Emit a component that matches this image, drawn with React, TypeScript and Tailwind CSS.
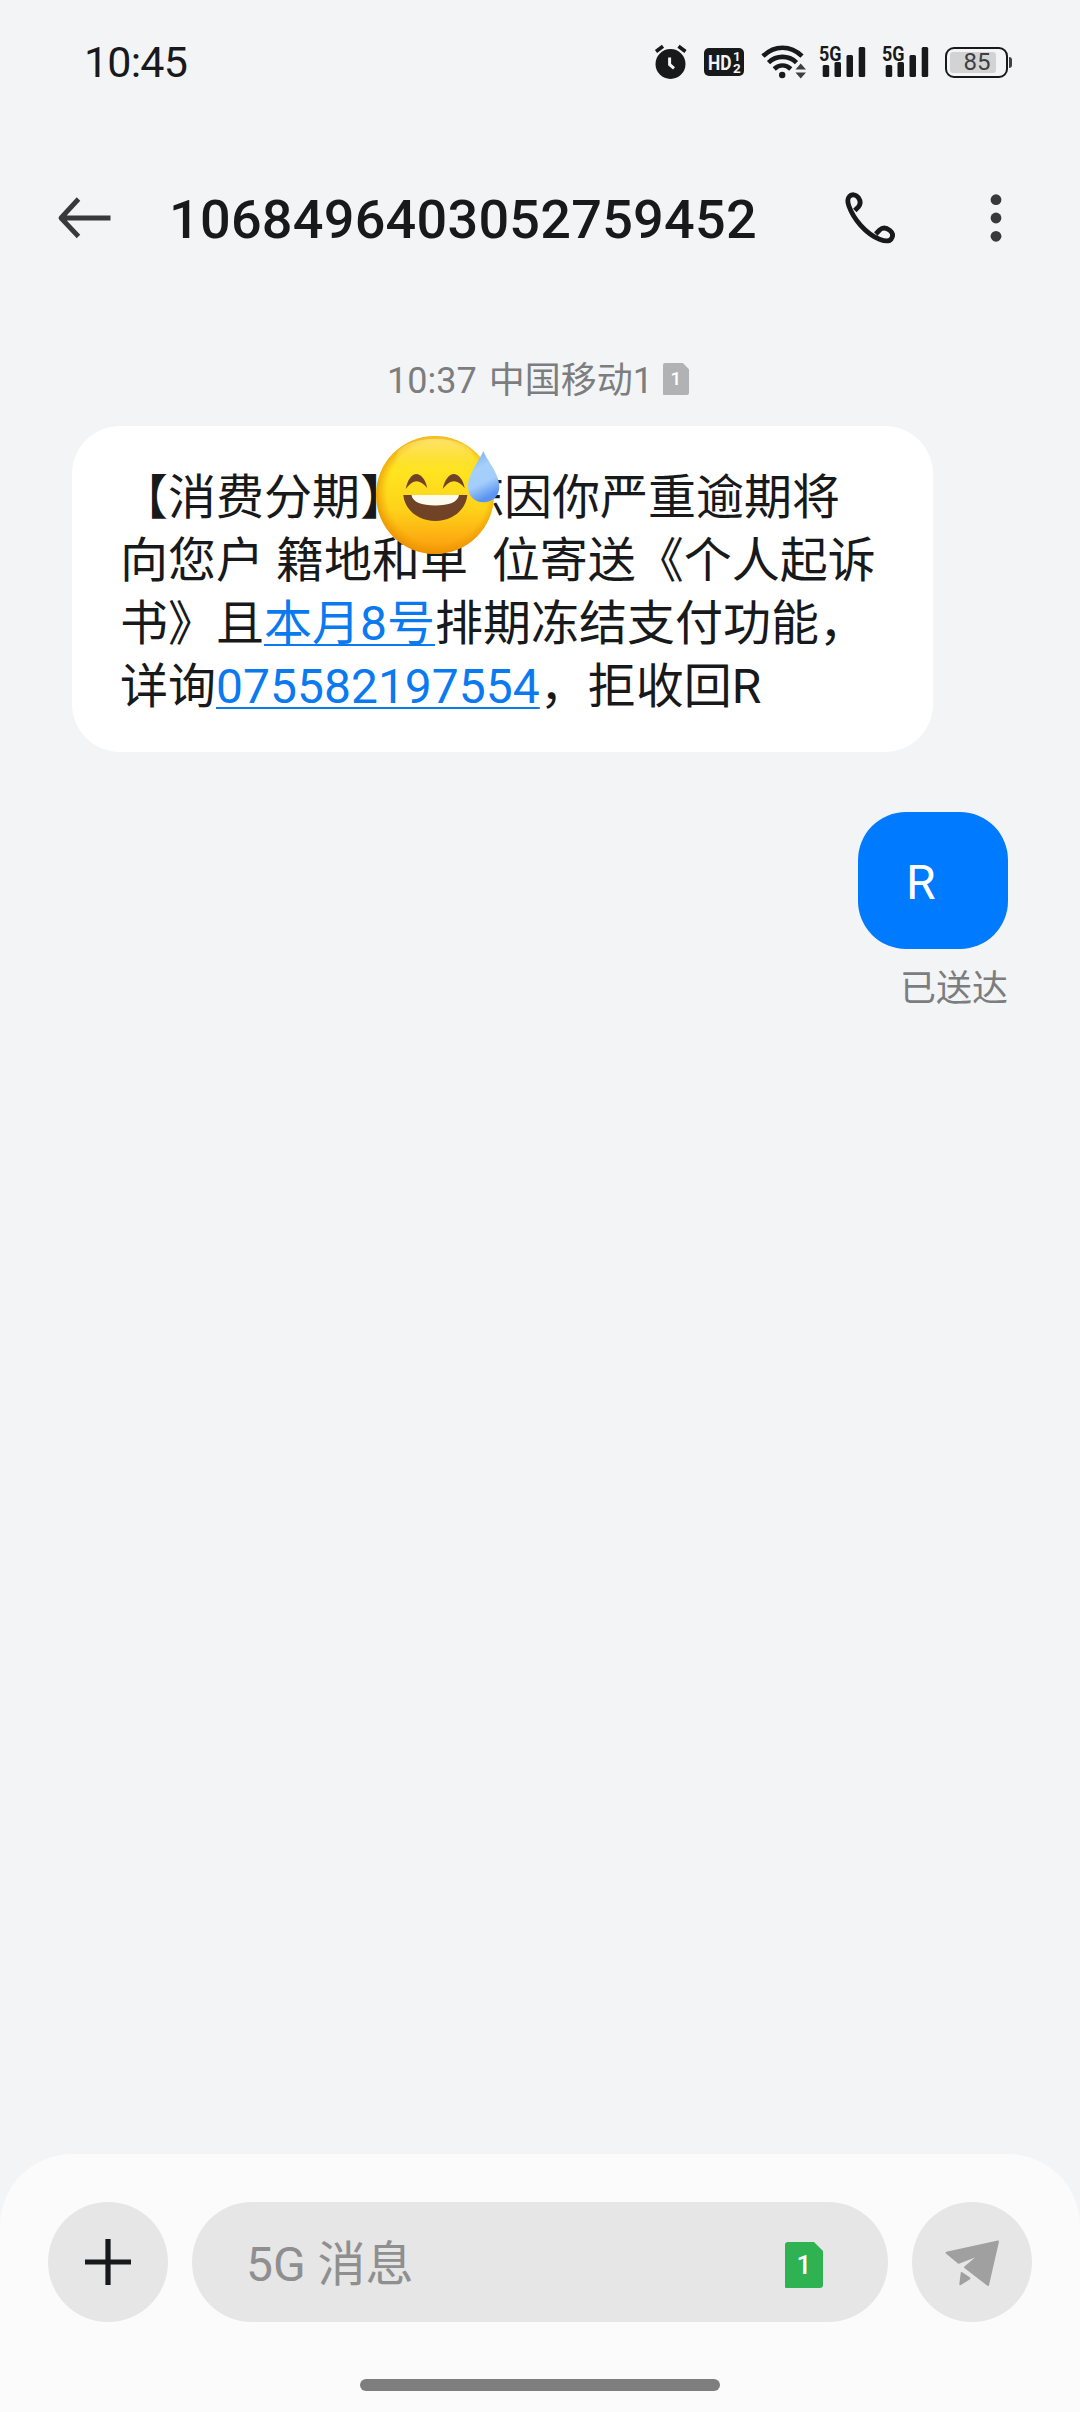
import type { ReactNode } from "react";

function AlarmIcon() {
  return (
    <svg width="34" height="36" viewBox="0 0 34 36" className="text-[#18191b]">
      <circle cx="16.5" cy="20" r="15" fill="currentColor" />
      <path
        d="M2 7.5 9 2.200M24.5 2.200 31.500 7.5"
        stroke="currentColor"
        strokeWidth="3.6"
        fill="none"
      />
      <path d="M15.6 13.5v7l4.4 3.8" stroke="#f3f4f6" strokeWidth="3" fill="none" />
    </svg>
  );
}

function HdBadge() {
  return (
    <div className="flex h-7 w-10 items-center gap-px rounded-[5px] bg-[#18191b] pl-1 font-['Roboto'] font-bold text-[#f3f4f6]">
      <svg width="24" height="28" viewBox="0 0 24 28" fill="currentColor" className="overflow-visible">
        <text
          x="0"
          y="21.5"
          textLength="23.5"
          lengthAdjust="spacingAndGlyphs"
          className="text-[21px] leading-none"
        >
          HD
        </text>
      </svg>
      <span className="flex flex-col text-[13.5px] leading-[12px]">
        <span>1</span>
        <span>2</span>
      </span>
    </div>
  );
}

function WifiIcon() {
  return (
    <svg width="45" height="36" viewBox="0 0 45 36" fill="none">
      <g stroke="#18191b" strokeWidth="4.600">
        <path d="M2 12.2C13.5 1 29.500 1 41 12.200" />
        <path d="M7.500 18.600C15.500 11 27.500 11 35.500 18.600" />
        <path d="M13.200 25C18.300 20.300 24.700 20.300 29.800 25" />
      </g>
      <circle cx="21.200" cy="31" r="3.200" fill="#18191b" />
      <path d="M34.500 25.500h10.500L39.700 19.500ZM34.500 28.500h10.500L39.700 34.500Z" fill="#3e3f41" />
    </svg>
  );
}

function SignalIcon() {
  return (
    <svg width="48" height="36" viewBox="0 0 48 36" className="overflow-visible text-[#18191b]">
      <text
        x="0"
        y="16.5"
        textLength="22.500"
        lengthAdjust="spacingAndGlyphs"
        fill="currentColor"
        className="font-['Roboto'] text-[21px] leading-none font-bold"
      >
        5G
      </text>
      <rect x="3.700" y="21" width="6.500" height="12" rx="1.500" fill="currentColor" />
      <rect x="15.500" y="18" width="6.500" height="15" rx="1.500" fill="currentColor" />
      <rect x="27.500" y="11" width="6.500" height="22" rx="1.500" fill="currentColor" />
      <rect x="39.700" y="3" width="6.500" height="30" rx="1.500" fill="currentColor" />
    </svg>
  );
}

function Battery() {
  return (
    <div className="flex items-center gap-px">
      <div className="h-[31px] w-[63px] rounded-[9px] border-2 border-[#18191b] p-[3px]">
        <div className="flex h-[21px] w-[46px] items-center justify-center rounded-[3px] bg-[#d3d3d4] pl-2 font-['Roboto'] text-2xl text-[#3e3f41]">
          85
        </div>
      </div>
      <div className="h-[11px] w-[3px] rounded-r-sm bg-[#3e3f41]" />
    </div>
  );
}

function BackIcon() {
  return (
    <svg width="54" height="42" viewBox="0 0 54 42" fill="none" stroke="#38393b" strokeWidth="4.800">
      <path d="M21.500 2 4 21 21.500 39.500M4 21H53.500" strokeLinejoin="round" />
    </svg>
  );
}

function PhoneIcon() {
  return (
    <svg width="60" height="60" viewBox="0 0 60 60" fill="none">
      <path
        d="M14.800 22.500 18.400 18.800C20.900 16 20.600 13 18.400 9.700C16 6 11.300 6 9.300 8.500C7.200 10.800 7.500 14 8.800 17.700C13.500 31 25.500 45.500 39.500 51.200C45.500 53.600 49.300 53.600 51.200 51C53.500 47.800 53 44.800 49.800 42.300C46.200 39.600 42.400 39.500 39.600 42L35.800 46"
        stroke="#18191b"
        strokeWidth="4.800"
      />
    </svg>
  );
}

function MoreIcon() {
  return (
    <svg width="12" height="50" viewBox="0 0 12 50" fill="#38393b">
      <circle cx="6" cy="6.700" r="5.400" />
      <circle cx="6" cy="25" r="5.400" />
      <circle cx="6" cy="43.300" r="5.400" />
    </svg>
  );
}

function SendIcon() {
  return (
    <svg
      width="62"
      height="56"
      viewBox="1 -2 62 56"
      fill="#a0a0a0"
      stroke="#a0a0a0"
      strokeWidth="2"
      strokeLinejoin="round"
    >
      <path d="M6.500 16.800 58 5.500 48 49 25 31.200 40.500 18.200 18.600 26.700Z" />
      <path d="M21.700 37 29.500 42.300 20.300 48.200Z" />
    </svg>
  );
}

function GrinSweatEmoji() {
  return (
    <svg width="126" height="120" viewBox="0 0 126 120">
      <defs>
        <linearGradient id="face" x1="0" y1="0" x2="0" y2="1">
          <stop offset="0" stopColor="#fbd33a" />
          <stop offset=".3" stopColor="#ffe41f" />
          <stop offset=".62" stopColor="#fed21a" />
          <stop offset="1" stopColor="#fb9a0c" />
        </linearGradient>
        <radialGradient id="rim" cx=".52" cy=".48" r=".52">
          <stop offset=".82" stopColor="#ee9a00" stopOpacity="0" />
          <stop offset="1" stopColor="#e88f00" stopOpacity=".75" />
        </radialGradient>
        <linearGradient id="gloss" x1="0" y1="0" x2="0" y2="1">
          <stop offset="0" stopColor="#fff3a0" stopOpacity=".5" />
          <stop offset="1" stopColor="#ffe82a" stopOpacity="0" />
        </linearGradient>
        <linearGradient id="drop" x1="0" y1="0" x2=".3" y2="1">
          <stop offset="0" stopColor="#6fa9e6" />
          <stop offset=".4" stopColor="#a6cffa" />
          <stop offset=".7" stopColor="#a3cdfb" />
          <stop offset="1" stopColor="#5b94f0" />
        </linearGradient>
      </defs>
      <circle cx="59" cy="60" r="59" fill="url(#face)" />
      <circle cx="59" cy="60" r="59" fill="url(#rim)" />
      <ellipse cx="59" cy="22" rx="39" ry="18" fill="url(#gloss)" />
      <g fill="#704327">
        <path d="M29.700 54C31.500 44.500 36 39 40.300 39S49.500 44 51.200 53C47.500 48.500 44 46.300 40.500 46.300S33.500 49 29.700 54Z" />
        <path d="M66.700 54C68.500 44.500 73.500 39 77.800 39S87 44 88.700 53C85 48.500 81.500 46.300 78 46.300S70.500 49 66.700 54Z" />
        <path d="M27.300 60H91.300C90 75 76 86 59.300 86S28.600 75 27.300 60Z" />
      </g>
      <path d="M35.500 60H83C82 67 73 70.500 59.300 70.500S36.500 67 35.500 60Z" fill="#fdfaf0" />
      <path
        d="M107.300 16C110 24 123.300 38 123.300 51.500C123.300 61 116.500 67.300 107.500 67.300S92 61 92 51.500C92 38 104.600 24 107.300 16Z"
        fill="url(#drop)"
      />
    </svg>
  );
}

type SimBadgeProps = {
  className: string;
  color: string;
};

function SimBadge(props: SimBadgeProps) {
  return (
    <span className={`relative flex items-center justify-center text-white ${props.className}`}>
      <svg
        className="absolute inset-0 h-full w-full"
        viewBox="0 0 38 46"
        fill={props.color}
        preserveAspectRatio="none"
      >
        <path d="M3 0H29L38 9V43Q38 46 35 46H1Q0 46 0 45V3Q0 0 3 0Z" />
      </svg>
      <span className="relative">1</span>
    </span>
  );
}

function Link(props: { children: ReactNode }) {
  return (
    <a
      href="#"
      className="text-[#0b7af0] underline decoration-2 underline-offset-[4px] [text-decoration-skip-ink:none]"
    >
      {props.children}
    </a>
  );
}

function StatusBar() {
  return (
    <div className="flex h-[126px] justify-between pr-[68px] pl-[84px]">
      <span className="mt-[37px] text-[43px] leading-[50px] tracking-[-0.8px]">10:45</span>
      <div className="mt-[44px] flex h-9 items-center">
        <AlarmIcon />
        <div className="ml-4">
          <HdBadge />
        </div>
        <div className="ml-[17px]">
          <WifiIcon />
        </div>
        <div className="ml-[13px]">
          <SignalIcon />
        </div>
        <div className="ml-[15px]">
          <SignalIcon />
        </div>
        <div className="ml-[15px]">
          <Battery />
        </div>
      </div>
    </div>
  );
}

function Header() {
  return (
    <header className="flex h-[184px] items-center">
      <button className="ml-[57px]">
        <BackIcon />
      </button>
      <h1 className="mt-[3px] ml-[58px] w-[629px] text-[54px] leading-[64px] font-medium tracking-[0.25px]">
        1068496403052759452
      </h1>
      <button className="ml-[42px]">
        <PhoneIcon />
      </button>
      <button className="ml-[90px]">
        <MoreIcon />
      </button>
    </header>
  );
}

export default function App() {
  return (
    <main className="flex h-[2412px] w-[1080px] flex-col bg-[#f3f4f6] font-['Roboto','Noto_Sans_CJK_SC',sans-serif] text-[#18191b]">
      <StatusBar />
      <Header />

      <section className="flex flex-1 flex-col px-[72px] pt-[48px]">
        <div className="flex h-[44px] items-center justify-center pr-1 text-[36px] leading-[44px] text-[#7c7d7f]">
          <span className="mt-0.5">10:37</span>
          <span className="mt-0.5 ml-[12px]">中国移动1</span>
          <SimBadge
            className="mb-[3px] ml-[10px] h-8 w-[26px] text-[19px] font-medium"
            color="#b1b2b4"
          />
        </div>

        <div className="relative mt-[24px] w-[861px] rounded-[48px] bg-white px-12 pt-[40px] pb-[34px] text-[48px] leading-[63px] whitespace-pre">
          <p>【消费分期】小陈因你严重逾期将</p>
          <p>向您户 籍地和单{"  "}位寄送《个人起诉</p>
          <p>
            书》且<Link>本月8号</Link>排期冻结支付功能，
          </p>
          <p>
            详询<Link>075582197554</Link>，拒收回R
          </p>
          <div className="absolute top-[9px] left-[304px]">
            <GrinSweatEmoji />
          </div>
        </div>

        <div className="mt-[60px] flex flex-col items-end">
          <div className="h-[137px] w-[150px] rounded-[48px] bg-[#007aff] px-12 pt-[39px] text-[48px] leading-[63px] text-white">
            R
          </div>
          <span className="mt-[18px] text-[36px] leading-[44px] text-[#7c7d7f]">已送达</span>
        </div>
      </section>

      <footer className="flex h-[258px] flex-col rounded-t-[72px] bg-[#fbfbfb] px-12 pt-12">
        <div className="flex gap-6">
          <button className="flex size-[120px] items-center justify-center rounded-full bg-[#e6e6e6]">
            <svg width="46" height="46" viewBox="0 0 46 46" stroke="#18191b" strokeWidth="5.200">
              <path d="M23 0V46M0 23H46" />
            </svg>
          </button>
          <div className="flex h-[120px] flex-1 items-center justify-between rounded-full bg-[#e6e6e6] pr-[65px] pl-[54px]">
            <span className="mt-[5px] text-[48px] leading-[60px] text-[#8f8f8f]">5G 消息</span>
            <SimBadge
              className="mt-[6px] h-[46px] w-[38px] text-[26px] font-medium"
              color="#2fb252"
            />
          </div>
          <button className="flex size-[120px] items-center justify-center rounded-full bg-[#e6e6e6]">
            <SendIcon />
          </button>
        </div>
        <div className="mt-[57px] h-3 w-[360px] self-center rounded-full bg-[#7e7e7e]" />
      </footer>
    </main>
  );
}
